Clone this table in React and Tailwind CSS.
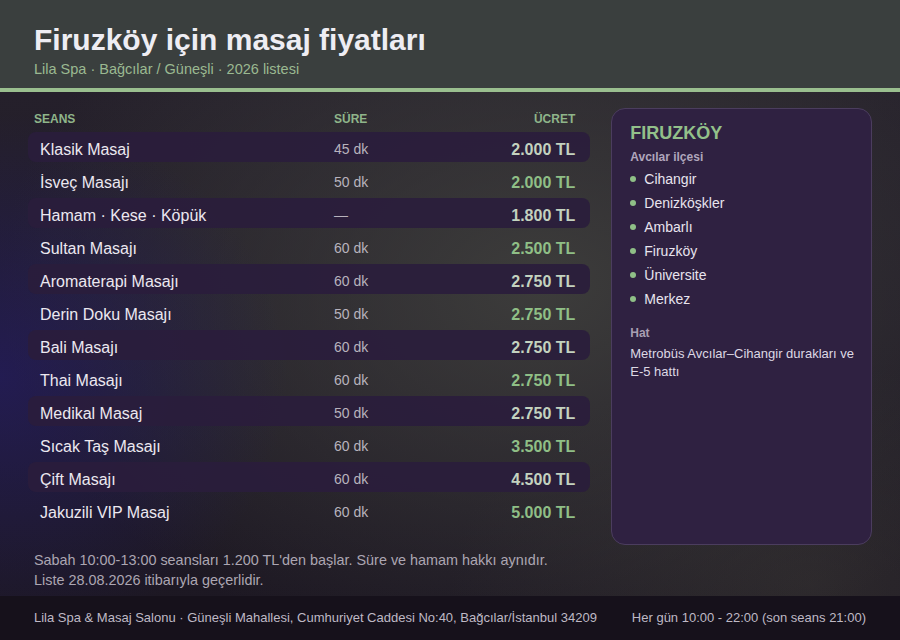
import React from "react";

const rows = [
  ["Klasik Masaj", "45 dk", "2.000 TL"],
  ["İsveç Masajı", "50 dk", "2.000 TL"],
  ["Hamam · Kese · Köpük", "—", "1.800 TL"],
  ["Sultan Masajı", "60 dk", "2.500 TL"],
  ["Aromaterapi Masajı", "60 dk", "2.750 TL"],
  ["Derin Doku Masajı", "50 dk", "2.750 TL"],
  ["Bali Masajı", "60 dk", "2.750 TL"],
  ["Thai Masajı", "60 dk", "2.750 TL"],
  ["Medikal Masaj", "50 dk", "2.750 TL"],
  ["Sıcak Taş Masajı", "60 dk", "3.500 TL"],
  ["Çift Masajı", "60 dk", "4.500 TL"],
  ["Jakuzili VIP Masaj", "60 dk", "5.000 TL"],
];

const places = ["Cihangir", "Denizköşkler", "Ambarlı", "Firuzköy", "Üniversite", "Merkez"];

export default function App() {
  return (
    <div className="w-[900px] h-[640px] overflow-hidden flex flex-col font-['Liberation_Sans',Arial,sans-serif] bg-[#1e1a24]">
      <header className="bg-[#3a3f3e] border-b-4 border-[#9abf8f] px-[34px] pt-[22px] pb-[9px]">
        <h1 className="text-[30px] leading-[36px] font-bold text-[#eeedf3]">Firuzköy için masaj fiyatları</h1>
        <p className="mt-[1px] text-[14.5px] leading-[20px] text-[#9ab991]">Lila Spa · Bağcılar / Güneşli · 2026 listesi</p>
      </header>
      <main className="flex-1 flex flex-col bg-[radial-gradient(ellipse_32%_48%_at_0%_52%,rgba(36,28,100,0.7),transparent),radial-gradient(ellipse_60%_70%_at_60%_35%,rgba(62,62,60,0.95),transparent),radial-gradient(ellipse_40%_40%_at_90%_90%,rgba(55,52,50,0.6),transparent),linear-gradient(180deg,#25202b,#1c1722)]">
        <div className="px-[28px] pt-[16px] flex gap-[21px] h-[453px]">
          <div className="w-[563px] flex flex-col">
            <div className="flex items-center h-5 mt-[1px] mb-[3px] pl-[6px] text-[12px] font-bold text-[#8fb58a]">
              <div className="w-[300px]">SEANS</div>
              <div className="flex-1">SÜRE</div>
              <div className="pr-[15px]">ÜCRET</div>
            </div>
            <div className="flex flex-col gap-[3px]">
              {rows.map((r, i) => {
                const striped = i % 2 === 0;
                return (
                  <div
                    key={i}
                    className={
                      "flex items-center h-[30px] rounded-lg pl-3 pt-[5px] " +
                      (striped ? "bg-[#2a1d3c]/90" : "")
                    }
                  >
                    <div className="w-[294px] text-[16px] text-[#ece8f0]">{r[0]}</div>
                    <div className="flex-1 text-[14px] text-[#b8b3bd]">{r[1]}</div>
                    <div
                      className={
                        "pr-[15px] text-[16px] font-bold " +
                        (striped ? "text-[#c3d2bf]" : "text-[#8fbf86]")
                      }
                    >
                      {r[2]}
                    </div>
                  </div>
                );
              })}
            </div>
          </div>
          <aside className="w-[261px] h-[437px] rounded-[14px] border border-[#4b3d5e] bg-[#2f2141] pl-[18px] pr-[14px] pt-[13px]">
            <div className="text-[18px] leading-[22px] font-bold text-[#93c08a]">FIRUZKÖY</div>
            <div className="mt-[5px] text-[12px] leading-[16px] font-bold text-[#b0a6bc]">Avcılar ilçesi</div>
            <ul className="mt-[2px]">
              {places.map((p) => (
                <li key={p} className="flex items-center gap-2 h-6 text-[14px] text-[#e8e4ee]">
                  <span className="w-[6px] h-[6px] rounded-full bg-[#8fbf87]" />
                  {p}
                </li>
              ))}
            </ul>
            <div className="mt-[14px] text-[12px] leading-[16px] font-bold text-[#a89eb2]">Hat</div>
            <p className="mt-[4px] text-[13px] leading-[18px] text-[#ddd8e4]">
              Metrobüs Avcılar–Cihangir durakları ve E-5 hattı
            </p>
          </aside>
        </div>
        <div className="px-[34px] mt-[5px] text-[14.4px] leading-[20px] text-[#aca6b2]">
          <p>Sabah 10:00-13:00 seansları 1.200 TL'den başlar. Süre ve hamam hakkı aynıdır.</p>
          <p>Liste 28.08.2026 itibarıyla geçerlidir.</p>
        </div>
        <div className="flex-1" />
        <footer className="h-[44px] bg-[#16111b] px-[34px] flex items-center justify-between text-[13px] text-[#bfb9c5]">
          <span>Lila Spa &amp; Masaj Salonu · Güneşli Mahallesi, Cumhuriyet Caddesi No:40, Bağcılar/İstanbul 34209</span>
          <span>Her gün 10:00 - 22:00 (son seans 21:00)</span>
        </footer>
      </main>
    </div>
  );
}
